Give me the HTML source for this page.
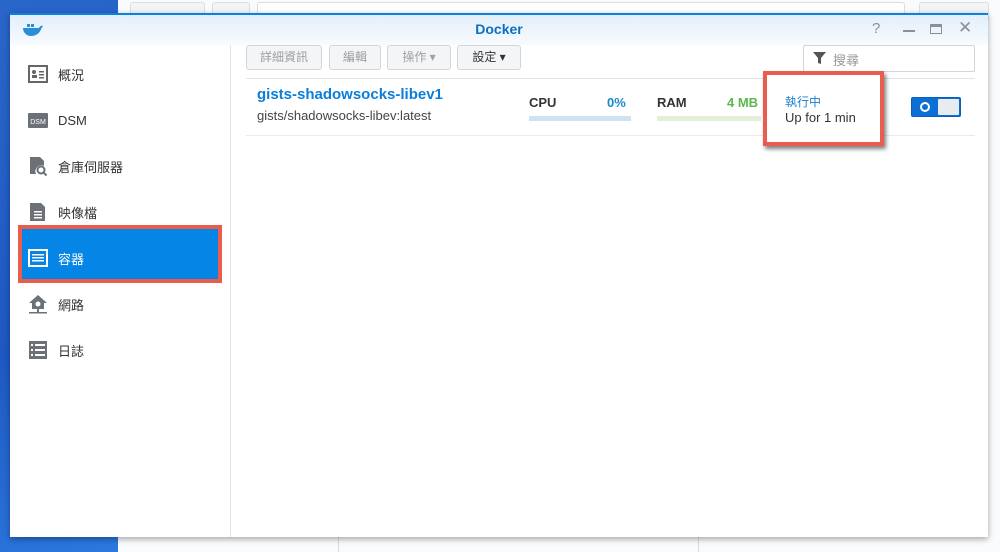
<!DOCTYPE html>
<html><head><meta charset="utf-8"><style>
*{box-sizing:border-box;margin:0;padding:0}
body{width:1000px;height:552px;overflow:hidden;position:relative;background:#fff;font-family:"Liberation Sans","Noto Sans CJK TC",sans-serif;}
.desk{position:absolute;left:0;top:0;width:118px;height:552px;background:linear-gradient(160deg,#2a66c9,#1f58c4 60%,#2b78de);}
.bgwin{position:absolute;left:118px;top:0;width:882px;height:552px;background:#fafbfc;}
.win{position:absolute;left:10px;top:13px;width:978px;height:524px;background:#fff;border-top:2px solid #0a82e0;box-shadow:0 2px 6px rgba(0,0,0,.35);}
.title{position:absolute;left:0;top:0;width:100%;height:30px;background:linear-gradient(#e2effa,#f8fbfe);}
.title .t{position:absolute;left:0;right:0;top:6px;text-align:center;color:#0a6fc2;font-weight:bold;font-size:14px;}
.side{position:absolute;left:0;top:30px;width:221px;bottom:0;border-right:1px solid #e2e4e6;}
.item{position:absolute;left:18px;height:20px;font-size:13px;color:#333;display:flex;align-items:center;}
.item svg{margin-right:10px}
.sel{position:absolute;left:12px;top:184px;width:196px;height:50px;background:#0585e5;outline:4px solid #ea5d4e;}
.btn{position:absolute;top:30px;height:25px;border:1px solid #d2d6da;border-radius:3px;background:#f4f5f6;font-size:12px;color:#9aa0a6;text-align:center;line-height:23px;}
</style></head><body>
<div class="desk"></div>
<div class="bgwin">
 <div style="position:absolute;left:12px;top:2px;width:75px;height:20px;border:1px solid #ddd;border-radius:3px;background:#f3f4f5"></div>
 <div style="position:absolute;left:94px;top:2px;width:38px;height:20px;border:1px solid #ddd;border-radius:3px;background:#f3f4f5"></div>
 <div style="position:absolute;left:139px;top:2px;width:648px;height:20px;border:1px solid #ddd;border-radius:3px;background:#fff"></div>
 <div style="position:absolute;left:801px;top:2px;width:70px;height:20px;border:1px solid #ddd;border-radius:3px;background:#f3f4f5"></div>
 <div style="position:absolute;left:220px;top:537px;width:1px;height:15px;background:#ddd"></div>
 <div style="position:absolute;left:580px;top:537px;width:1px;height:15px;background:#ddd"></div>
</div>
<div class="win">
 <div class="title"><div class="t">Docker</div>
  <svg style="position:absolute;left:12px;top:7px" width="22" height="14" viewBox="0 0 22 14"><path d="M1 6h16c1-2 3-3 4-2-1 1-1 2-2 3-1 4-5 7-10 7C4 14 1 10 1 6z" fill="#2a8fd6"/><rect x="5" y="2" width="3" height="3" fill="#2a8fd6"/><rect x="9" y="2" width="3" height="3" fill="#2a8fd6"/></svg>
  <div style="position:absolute;left:862px;top:5px;color:#8a9096;font-size:15px">?</div>
  <div style="position:absolute;left:893px;top:15px;width:12px;height:1.5px;background:#8a9096"></div>
  <div style="position:absolute;left:920px;top:9px;width:12px;height:10px;border:1.5px solid #8a9096;border-top-width:3px"></div>
  <div style="position:absolute;left:948px;top:3px;color:#8a9096;font-size:17px">✕</div>
 </div>
 <div class="side">
  <div class="item" style="top:19px"><svg width="20" height="18" viewBox="0 0 20 18"><rect x="1" y="1" width="18" height="16" fill="none" stroke="#666" stroke-width="2"/><circle cx="6" cy="7" r="2" fill="#666"/><rect x="4" y="10" width="5" height="3" fill="#666"/><rect x="11" y="6" width="5" height="1.5" fill="#666"/><rect x="11" y="9" width="5" height="1.5" fill="#666"/><rect x="11" y="12" width="5" height="1.5" fill="#666"/></svg>概況</div>
  <div class="item" style="top:65px"><svg width="20" height="18" viewBox="0 0 20 18"><rect x="0" y="2" width="20" height="15" rx="1" fill="#6b7177"/><text x="10" y="13" font-size="7" fill="#fff" text-anchor="middle" font-family="Liberation Sans">DSM</text></svg>DSM</div>
  <div class="item" style="top:111px"><svg width="20" height="20" viewBox="0 0 20 20"><path d="M2 1h10l4 4v5a6 6 0 0 0-8 8H2z" fill="#6b7177"/><circle cx="13" cy="14" r="3.5" fill="none" stroke="#6b7177" stroke-width="2"/><path d="M15.5 16.5l3 3" stroke="#6b7177" stroke-width="2"/></svg>倉庫伺服器</div>
  <div class="item" style="top:157px"><svg width="20" height="20" viewBox="0 0 20 20"><path d="M2 1h11l4 4v14H2z" fill="#6b7177"/><rect x="6" y="9" width="8" height="1.5" fill="#fff"/><rect x="6" y="12" width="8" height="1.5" fill="#fff"/><rect x="6" y="15" width="8" height="1.5" fill="#fff"/></svg>映像檔</div>
  <div class="sel"></div>
  <div class="item" style="top:203px;color:#fff"><svg width="20" height="18" viewBox="0 0 20 18"><rect x="1" y="1" width="18" height="16" fill="none" stroke="#fff" stroke-width="2"/><rect x="4" y="5" width="12" height="1.5" fill="#fff"/><rect x="4" y="8" width="12" height="1.5" fill="#fff"/><rect x="4" y="11" width="12" height="1.5" fill="#fff"/></svg>容器</div>
  <div class="item" style="top:249px"><svg width="20" height="20" viewBox="0 0 20 20"><path d="M10 1L1 9h3v6h12V9h3z" fill="#6b7177"/><circle cx="10" cy="10" r="2.5" fill="#fff"/><rect x="9" y="15" width="2" height="3" fill="#6b7177"/><rect x="1" y="18" width="18" height="1.5" fill="#6b7177"/></svg>網路</div>
  <div class="item" style="top:295px"><svg width="20" height="20" viewBox="0 0 20 20"><rect x="1" y="1" width="18" height="18" fill="#6b7177"/><rect x="3" y="4" width="2" height="2" fill="#fff"/><rect x="7" y="4" width="10" height="2" fill="#fff"/><rect x="3" y="9" width="2" height="2" fill="#fff"/><rect x="7" y="9" width="10" height="2" fill="#fff"/><rect x="3" y="14" width="2" height="2" fill="#fff"/><rect x="7" y="14" width="10" height="2" fill="#fff"/></svg>日誌</div>
 </div>
 <div class="btn" style="left:236px;width:76px">詳細資訊</div>
 <div class="btn" style="left:319px;width:52px">編輯</div>
 <div class="btn" style="left:377px;width:64px">操作 ▾</div>
 <div class="btn" style="left:447px;width:64px;color:#333">設定 ▾</div>
 <div style="position:absolute;left:793px;top:30px;width:172px;height:27px;border:1px solid #d2d6da;border-radius:2px;font-size:13px;color:#999;padding:4px 0 0 29px">搜尋
  <svg style="position:absolute;left:9px;top:6px" width="13" height="13" viewBox="0 0 13 13"><path d="M0 0h13L8 6v6L5 11V6z" fill="#555"/></svg></div>
 <div style="position:absolute;left:236px;top:63px;width:729px;height:1px;background:#e2e4e6"></div>
 <div style="position:absolute;left:236px;top:120px;width:729px;height:1px;background:#e8eaec"></div>
 <div style="position:absolute;left:247px;top:71px;color:#0a7ed8;font-weight:bold;font-size:15px">gists-shadowsocks-libev1</div>
 <div style="position:absolute;left:247px;top:93px;color:#444;font-size:13px">gists/shadowsocks-libev:latest</div>
 <div style="position:absolute;left:519px;top:80px;color:#333;font-weight:bold;font-size:13px">CPU</div>
 <div style="position:absolute;left:597px;top:80px;color:#1a8ad0;font-weight:bold;font-size:13px">0%</div>
 <div style="position:absolute;left:519px;top:101px;width:102px;height:5px;background:#cfe3f4"></div>
 <div style="position:absolute;left:647px;top:80px;color:#333;font-weight:bold;font-size:13px">RAM</div>
 <div style="position:absolute;left:717px;top:80px;color:#5cb84c;font-weight:bold;font-size:13px">4 MB</div>
 <div style="position:absolute;left:647px;top:101px;width:104px;height:5px;background:#e2efd9"></div>
 <div style="position:absolute;left:753px;top:56px;width:121px;height:75px;border:4px solid #ea5d4e;background:#fff;box-shadow:2px 3px 4px rgba(0,0,0,.5)"></div>
 <div style="position:absolute;left:775px;top:78px;color:#1a80d0;font-size:12px">執行中</div>
 <div style="position:absolute;left:775px;top:95px;color:#333;font-size:13px">Up for 1 min</div>
 <div style="position:absolute;left:901px;top:82px;width:50px;height:20px;border-radius:2px;background:#0b6fd6;border:1px solid #0a5fb8">
  <div style="position:absolute;left:26px;top:1px;width:21px;height:16px;background:#e8ecf0;border-radius:1px"></div>
  <div style="position:absolute;left:8px;top:4px;width:10px;height:10px;border:2px solid #fff;border-radius:50%"></div>
 </div>
</div>
</body></html>
